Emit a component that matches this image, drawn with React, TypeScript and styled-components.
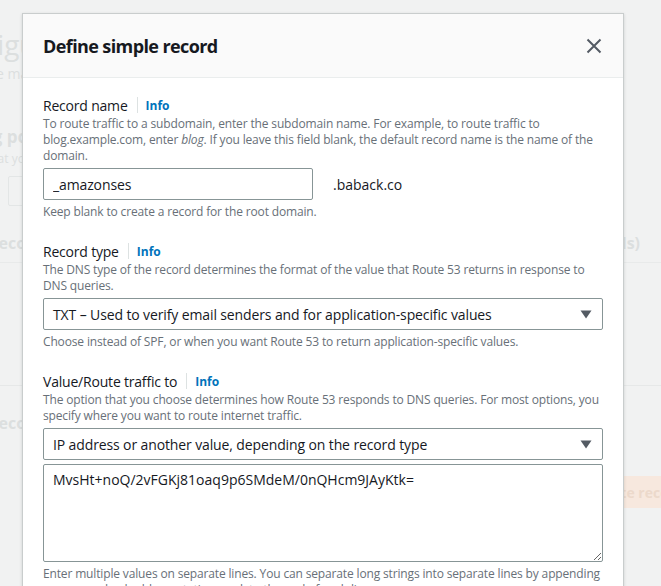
import React from "react";
import styled, { createGlobalStyle } from "styled-components";

const Global = createGlobalStyle`
  html, body { margin: 0; padding: 0; overflow: hidden; }
  body { font-family: "Open Sans", "Noto Sans", Arial, sans-serif; background: #f1f2f2; }
  * { box-sizing: border-box; }
`;

const Viewport = styled.div`
  position: relative;
  width: 661px;
  height: 586px;
  overflow: hidden;
  background: #f1f2f2;
`;

/* ---------- faded page behind the modal ---------- */
const Page = styled.div`
  width: 800px;
  margin-left: -64px;
  padding-top: 24px;
  color: #dcdfdf;
`;

const PageTitle = styled.h1`
  margin: 0;
  font-size: 28px;
  line-height: 40px;
  font-weight: 400;
`;

const PageSub = styled.p`
  margin: 0;
  font-size: 14px;
  line-height: 20px;
`;

const Section = styled.div`
  padding-top: 42px;
`;

const SectionTitle = styled.h2`
  margin: 0;
  font-size: 17px;
  line-height: 22px;
  font-weight: 700;
`;

const SectionText = styled.p`
  margin: 0;
  font-size: 12px;
  line-height: 22px;
`;

const TileRow = styled.div`
  display: flex;
  gap: 8px;
  margin-top: 6px;
`;

const Tile = styled.div`
  width: 64px;
  height: 30px;
  border: 1px solid #e3e6e6;
  border-radius: 2px;
`;

const Card = styled.div`
  margin-top: 26px;
`;

const CardHeader = styled.div`
  display: flex;
  justify-content: space-between;
  padding: 0 96px 8px 52px;
  font-size: 16px;
  line-height: 22px;
  font-weight: 700;
  border-bottom: 1px solid #e8eaea;
`;

const CardBody = styled.div`
  height: 123px;
  border-bottom: 1px solid #e6e8e8;
`;

const CardFooter = styled.div`
  padding: 26px 0 0 52px;
  font-size: 16px;
  font-weight: 700;
  line-height: 22px;
`;

const ActionRow = styled.div`
  display: flex;
  justify-content: flex-end;
  padding: 42px 25px 0 0;
`;

const FadedPrimary = styled.div`
  height: 32px;
  padding: 0 20px;
  display: flex;
  align-items: center;
  background: #f7e8de;
  color: #ecd9cb;
  font-size: 14px;
  font-weight: 700;
`;

/* ---------- modal ---------- */
const Modal = styled.div`
  position: absolute;
  left: 22px;
  top: 13px;
  width: 602px;
  background: #ffffff;
  border: 1px solid #c9cdcd;
  box-shadow: 0 1px 3px rgba(0, 28, 36, 0.15);
`;

const ModalHeader = styled.div`
  height: 64px;
  display: flex;
  align-items: center;
  justify-content: space-between;
  padding: 0 20px;
  background: #fafafa;
  border-bottom: 1px solid #eaeded;
`;

const ModalTitle = styled.h2`
  margin: 0;
  padding-top: 1px;
  font-size: 18px;
  line-height: 26px;
  font-weight: 700;
  color: #16191f;
  letter-spacing: -0.6px;
`;

const CloseButton = styled.button`
  width: 22px;
  height: 22px;
  padding: 0;
  margin-right: -2px;
  border: 0;
  background: transparent;
  display: flex;
  align-items: center;
  justify-content: center;
  cursor: pointer;
`;

const ModalBody = styled.div`
  padding: 16px 20px 20px;
  display: flex;
  flex-direction: column;
  gap: 20px;
`;

const Field = styled.div`
  display: flex;
  flex-direction: column;
`;

const LabelRow = styled.div`
  display: flex;
  align-items: center;
  height: 22px;
`;

const Label = styled.span`
  font-size: 14px;
  color: #16191f;
  letter-spacing: -0.2px;
`;

const Divider = styled.span`
  width: 1px;
  height: 16px;
  background: #dde2e2;
  margin: 0 8px 0 9px;
`;

const InfoLink = styled.a`
  font-size: 12px;
  font-weight: 700;
  color: #0073bb;
  text-decoration: none;
  padding-top: 1px;
`;

const Description = styled.p`
  margin: 0;
  font-size: 12px;
  line-height: 16px;
  color: #687078;
  letter-spacing: -0.15px;
`;

const Control = styled.div`
  margin-top: 4px;
`;

const Hint = styled.p`
  margin: 4px 0 0;
  font-size: 12px;
  line-height: 16px;
  color: #687078;
  letter-spacing: -0.15px;
`;

const InputRow = styled.div`
  display: flex;
  align-items: center;
  gap: 20px;
`;

const TextInput = styled.input`
  width: 270px;
  height: 32px;
  padding: 0 9px;
  border: 1px solid #879596;
  border-radius: 2px;
  font-family: inherit;
  font-size: 14px;
  letter-spacing: -0.12px;
  color: #16191f;
  outline: none;
`;

const Suffix = styled.span`
  font-size: 14px;
  color: #16191f;
`;

const SelectBox = styled.div`
  height: 32px;
  display: flex;
  align-items: center;
  justify-content: space-between;
  padding: 0 10px 0 9px;
  border: 1px solid #879596;
  border-radius: 2px;
  font-size: 14px;
  letter-spacing: -0.12px;
  color: #16191f;
`;

const Stack = styled.div`
  display: flex;
  flex-direction: column;
  gap: 4px;
`;

const TextArea = styled.textarea`
  display: block;
  width: 100%;
  height: 98px;
  padding: 5px 9px;
  border: 1px solid #879596;
  border-radius: 2px;
  font-family: inherit;
  font-size: 14px;
  line-height: 20px;
  color: #16191f;
  outline: none;
  resize: vertical;
`;

const Caret = () => (
  <svg width="12" height="9" viewBox="0 0 12 9" aria-hidden="true">
    <path d="M0.5 0.5 H11.5 L6 8.5 Z" fill="#545b64" />
  </svg>
);

const CloseIcon = () => (
  <svg width="16" height="16" viewBox="0 0 16 16" aria-hidden="true">
    <path d="M1.5 1.5 L14.5 14.5 M14.5 1.5 L1.5 14.5" stroke="#545b64" strokeWidth="2" fill="none" />
  </svg>
);

const FieldLabel: React.FC<{ text: string }> = ({ text }) => (
  <LabelRow>
    <Label>{text}</Label>
    <Divider />
    <InfoLink href="#">Info</InfoLink>
  </LabelRow>
);

export default function App() {
  return (
    <>
      <Global />
      <Viewport>
        <Page aria-hidden="true">
          <PageTitle>Configure records</PageTitle>
          <PageSub>Define the main records for the hosted zone</PageSub>
          <Section>
            <SectionTitle>Routing policy</SectionTitle>
            <SectionText>Choose what you want at the start</SectionText>
            <TileRow>
              <Tile />
              <Tile />
            </TileRow>
          </Section>
          <Card>
            <CardHeader>
              <span>Records</span>
              <span>(3 records)</span>
            </CardHeader>
            <CardBody />
            <CardFooter>Records</CardFooter>
            <ActionRow>
              <FadedPrimary>Create records</FadedPrimary>
            </ActionRow>
          </Card>
        </Page>

        <Modal role="dialog" aria-label="Define simple record">
          <ModalHeader>
            <ModalTitle>Define simple record</ModalTitle>
            <CloseButton aria-label="Close">
              <CloseIcon />
            </CloseButton>
          </ModalHeader>
          <ModalBody>
            <Field>
              <FieldLabel text="Record name" />
              <Description>
                To route traffic to a subdomain, enter the subdomain name. For example, to route traffic to
                blog.example.com, enter <i>blog</i>. If you leave this field blank, the default record name is the name of the
                domain.
              </Description>
              <Control>
                <InputRow>
                  <TextInput defaultValue="_amazonses" />
                  <Suffix>.baback.co</Suffix>
                </InputRow>
              </Control>
              <Hint>Keep blank to create a record for the root domain.</Hint>
            </Field>

            <Field>
              <FieldLabel text="Record type" />
              <Description>
                The DNS type of the record determines the format of the value that Route 53 returns in response to
                DNS queries.
              </Description>
              <Control>
                <SelectBox>
                  <span>TXT – Used to verify email senders and for application-specific values</span>
                  <Caret />
                </SelectBox>
              </Control>
              <Hint>Choose instead of SPF, or when you want Route 53 to return application-specific values.</Hint>
            </Field>

            <Field>
              <FieldLabel text="Value/Route traffic to" />
              <Description>
                The option that you choose determines how Route 53 responds to DNS queries. For most options, you
                specify where you want to route internet traffic.
              </Description>
              <Control>
                <Stack>
                  <SelectBox>
                    <span>IP address or another value, depending on the record type</span>
                    <Caret />
                  </SelectBox>
                  <TextArea defaultValue="MvsHt+noQ/2vFGKj81oaq9p6SMdeM/0nQHcm9JAyKtk=" />
                </Stack>
              </Control>
              <Hint>
                Enter multiple values on separate lines. You can separate long strings into separate lines by appending
                a space and a double quotation mark to the end of each line.
              </Hint>
            </Field>
          </ModalBody>
        </Modal>
      </Viewport>
    </>
  );
}
